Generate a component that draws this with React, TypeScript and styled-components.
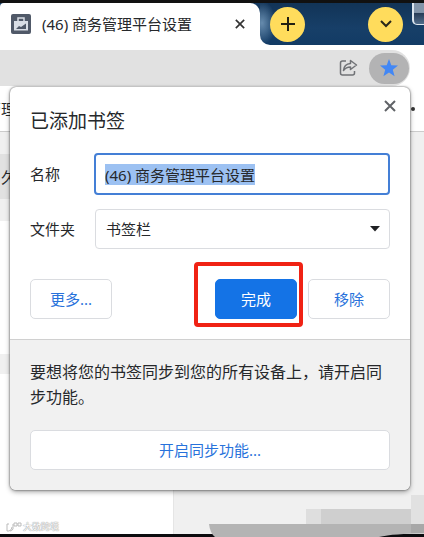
import React, { useEffect, useRef } from "react";
import styled, { createGlobalStyle } from "styled-components";

const GlobalStyle = createGlobalStyle`
  *, *::before, *::after { box-sizing: border-box; }
  body {
    margin: 0;
    color: #26282b;
    font-family: "Noto Sans", "Noto Sans CJK SC", sans-serif;
    font-size: 15px;
    line-height: 20px;
    overflow: hidden;
  }
  button, input, select { font: inherit; color: inherit; margin: 0; }
  button { cursor: pointer; }
`;

const Browser = styled.div`
  position: relative;
  display: flex;
  flex-direction: column;
  min-height: 100vh;
  background: #f0f0f0;
  border-top: 3px solid #111;
  border-bottom: 3px solid #0c0c0f;
`;

const TabStrip = styled.header`
  display: flex;
  height: 42px;
  background: #fff;
`;

const TabHolder = styled.div`
  flex: 0 0 260px;
  background: #163b62;
`;

const Tab = styled.div`
  display: flex;
  align-items: center;
  height: 100%;
  padding: 0 15px 0 11px;
  background: #fff;
  border-radius: 4px 10px 0 0;
`;

const TabTitle = styled.span`
  flex: 1;
  margin-left: 11px;
  white-space: nowrap;
`;

const IconButton = styled.button`
  display: flex;
  align-items: center;
  justify-content: center;
  padding: 0;
  border: 0;
  background: none;
`;

const Frame = styled.div`
  flex: 1;
  display: flex;
  align-items: center;
  justify-content: space-between;
  padding: 0 21px 0 10px;
  background:
    radial-gradient(ellipse 14px 22px at 2px 20px, #668bad, transparent),
    linear-gradient(#123457, #173f68 60%, #123b65);
  border-bottom-left-radius: 10px;
`;

const RoundButton = styled(IconButton)`
  width: 35px;
  height: 35px;
  border-radius: 50%;
  background: #ffdc5c;
`;

const CaptionControl = styled.div`
  position: absolute;
  top: 0;
  right: 0;
  width: 12px;
  height: 22px;
  border: 1px solid #dce5ee;
  border-width: 0 0 1px 2px;
  border-bottom-left-radius: 5px;
  background: linear-gradient(#8395aa 45%, #283d58 50%, #526d8c);
`;

const Toolbar = styled.div`
  padding: 5px 14px 0 0;
  background: #fff;
`;

const AddressBar = styled.div`
  display: flex;
  align-items: center;
  justify-content: flex-end;
  gap: 11px;
  height: 36px;
  padding-right: 1px;
  background: #e1e1e1;
  border-radius: 0 18px 18px 0;
`;

const StarButton = styled(IconButton)`
  width: 40px;
  height: 31px;
  border-radius: 16px;
  background: #b3b3b4;
`;

const BookmarksBar = styled.div`
  display: flex;
  align-items: center;
  justify-content: space-between;
  height: 46px;
  padding-right: 9px;
  background: #fff;
  border-bottom: 1px solid #ccc;
`;

const Clipped = styled.div`
  display: flex;
  justify-content: flex-end;
  width: 16px;
  overflow: hidden;
  white-space: nowrap;
`;

const Overflow = styled.span`
  width: 4px;
  height: 4px;
  border-radius: 50%;
  background: #333;
`;

const Page = styled.main`
  flex: 1;
  display: flex;
  flex-direction: column;
  background: #f0f0f0;
`;

const PageTab = styled.div`
  display: flex;
  align-items: center;
  width: 174px;
  height: 45px;
  margin: 22px 0;
  background: #e1e1e1;
`;

const Card = styled.div<{ $grow?: boolean }>`
  width: 174px;
  height: ${(p) => (p.$grow ? "auto" : "133px")};
  flex: ${(p) => (p.$grow ? "1" : "none")};
  margin-bottom: ${(p) => (p.$grow ? "0" : "20px")};
  background: #fff;
  border-right: 1px solid #e5e5e5;
`;

const Bubble = styled.section`
  position: absolute;
  top: 84px;
  left: 10px;
  right: 14px;
  background: #fff;
  border-radius: 6px;
  box-shadow: 0 0 2px rgba(0, 0, 0, 0.7), 0 2px 5px rgba(0, 0, 0, 0.35);
`;

const BubbleBody = styled.form`
  display: flex;
  flex-direction: column;
  padding: 0 20px 20px;
`;

const BubbleHeader = styled.div`
  display: flex;
  justify-content: space-between;
  height: 66px;
  padding-top: 12px;
  margin-right: -6px;
`;

const Title = styled.h1`
  margin: 8px 0 0;
  font-size: 19px;
  line-height: 28px;
  font-weight: 400;
`;

const CloseButton = styled(IconButton)`
  width: 12px;
  height: 14px;
`;

const Field = styled.div`
  display: grid;
  grid-template-columns: 64px 1fr;
  align-items: center;
`;

const FolderLabel = styled.label`
  align-self: start;
  margin-top: 24px;
`;

const NameInput = styled.input`
  width: 100%;
  height: 42px;
  padding: 0 9px;
  border: 2px solid #447fd6;
  border-radius: 4px;
  outline: 0;
  background: #fff;
  &::selection { background: #9cc1f2; color: #26282b; }
`;

const SelectWrap = styled.div`
  position: relative;
  margin: 14px 0 30px 1px;
`;

const FolderSelect = styled.select`
  display: block;
  width: 100%;
  height: 40px;
  padding: 0 10px;
  appearance: none;
  border: 1px solid #dadce0;
  border-radius: 4px;
  background: #fff;
`;

const Caret = styled.svg`
  position: absolute;
  right: 10px;
  top: 17px;
  pointer-events: none;
`;

const Actions = styled.div`
  display: flex;
  justify-content: space-between;
  gap: 11px;
`;

const ActionGroup = styled.div`
  display: flex;
  gap: 11px;
`;

const Button = styled.button<{ $primary?: boolean; $wide?: boolean }>`
  width: ${(p) => (p.$wide ? "100%" : "82px")};
  height: 40px;
  padding: 0;
  border: 1px solid ${(p) => (p.$primary ? "#1473e6" : "#dadce0")};
  border-radius: 5px;
  background: ${(p) => (p.$primary ? "#1473e6" : "#fff")};
  color: ${(p) => (p.$primary ? "#fff" : "#2872db")};
`;

const Highlighted = styled.div`
  position: relative;
  &::after {
    content: "";
    position: absolute;
    inset: -17px -6px -8px -21px;
    border: 4px solid #f02214;
    border-radius: 4px;
    pointer-events: none;
  }
`;

const SyncPanel = styled.div`
  padding: 20px;
  background: #f1f1f1;
  border-top: 1px solid #d0d0d0;
  border-radius: 0 0 6px 6px;
`;

const SyncText = styled.p`
  margin: 0 -6px 20px 0;
  font-size: 16px;
  line-height: 25px;
`;

const Watermark = styled.div`
  position: absolute;
  left: 6px;
  bottom: 1px;
  display: flex;
  align-items: center;
  gap: 1px;
  font-size: 9px;
  line-height: 12px;
  color: #fff;
  text-shadow: 0 0 1px #888, 0 0 1px #999;
`;

const Redaction = styled.svg`
  position: absolute;
  right: 0;
  bottom: -3px;
`;

const Cross = ({ size, color, weight }: { size: number; color: string; weight: number }) => (
  <svg width={size} height={size} viewBox="0 0 12 12" fill="none" stroke={color} strokeWidth={weight} aria-hidden="true">
    <path d="M1 1l10 10M11 1L1 11" />
  </svg>
);

const SiteIcon = () => (
  <svg width="20" height="20" viewBox="0 0 20 20" aria-hidden="true">
    <rect width="20" height="20" rx="2" fill="#505968" />
    <path d="M7 7V4h6v3" fill="none" stroke="#d9dee5" strokeWidth="1.5" />
    <path d="M3 7h14v9.500H3z" fill="#d9dee5" />
    <path d="M5 15l3-3 2 1 5-3.500V15z" fill="#505968" />
  </svg>
);

const ShareIcon = () => (
  <svg width="19" height="18" viewBox="0 0 19 18" fill="none" stroke="#707276" strokeWidth="1.5" strokeLinejoin="round" aria-hidden="true">
    <path d="M7 2H3.500Q1.500 2 1.500 4v10q0 2 2 2h10q2 0 2-2v-2" />
    <path d="M11.500 1.500L17.500 6l-6 4.500V8Q7 8 4.500 11.500 5 5 11.500 4.500z" />
  </svg>
);

export default function App() {
  const nameRef = useRef<HTMLInputElement>(null);

  useEffect(() => {
    nameRef.current?.focus();
    nameRef.current?.select();
  }, []);

  return (
    <>
      <GlobalStyle />
      <Browser>
        <TabStrip>
          <TabHolder>
            <Tab>
              <SiteIcon />
              <TabTitle>(46) 商务管理平台设置</TabTitle>
              <IconButton aria-label="关闭标签页">
                <Cross size={10} color="#333" weight={2} />
              </IconButton>
            </Tab>
          </TabHolder>
          <Frame>
            <RoundButton aria-label="新标签页">
              <svg width="16" height="16" viewBox="0 0 16 16" stroke="#211f12" strokeWidth="2" aria-hidden="true">
                <path d="M8 1v14M1 8h14" />
              </svg>
            </RoundButton>
            <RoundButton aria-label="搜索标签页">
              <svg width="14" height="10" viewBox="0 0 14 10" fill="none" stroke="#29271a" strokeWidth="2" aria-hidden="true">
                <path d="M2 2l5 5 5-5" />
              </svg>
            </RoundButton>
          </Frame>
          <CaptionControl />
        </TabStrip>
        <Toolbar>
          <AddressBar>
            <IconButton aria-label="分享">
              <ShareIcon />
            </IconButton>
            <StarButton aria-label="修改书签">
              <svg width="20" height="20" viewBox="0 0 20 20" fill="#4287f5" aria-hidden="true">
                <path d="M10 1l2.300 6.200 6.700.3-5.200 4.200 1.800 6.500-5.600-3.700-5.600 3.700 1.800-6.500L1 7.500l6.700-.3z" />
              </svg>
            </StarButton>
          </AddressBar>
        </Toolbar>
        <BookmarksBar>
          <Clipped>管理</Clipped>
          <Overflow />
        </BookmarksBar>
        <Page>
          <PageTab>
            <Clipped>久</Clipped>
          </PageTab>
          <Card />
          <Card $grow />
        </Page>

        <Redaction width="215" height="42" viewBox="0 0 215 42" aria-hidden="true">
          <path d="M97 14h15v15H97z" fill="#dedede" />
          <path d="M112 14h90v15h-90z" fill="#cfcfcf" />
          <path d="M202 0h13v29h-13z" fill="#e1e1e1" />
          <path d="M0 29h215v9.500Q185 38.500 170 42H6Q1 38 0 29z" fill="#b4b4b4" />
          <path d="M202 29h13v9h-13z" fill="#a8a8a8" />
        </Redaction>
        <Watermark>
          <svg width="16" height="11" viewBox="0 0 16 11" fill="none" stroke="#bbb" aria-hidden="true">
            <path d="M1 2v7h2q3-1 3-4M1 2h2M7 2v5q-1 2-3 2M8 1h3v3H8zM12 1h3v3h-3z" />
          </svg>
          <span>大数跨境</span>
        </Watermark>

        <Bubble role="dialog" aria-labelledby="bubble-title">
          <BubbleBody onSubmit={(e: React.FormEvent) => e.preventDefault()}>
            <BubbleHeader>
              <Title id="bubble-title">已添加书签</Title>
              <CloseButton type="button" aria-label="关闭">
                <Cross size={12} color="#606367" weight={2} />
              </CloseButton>
            </BubbleHeader>
            <Field>
              <label htmlFor="name">名称</label>
              <NameInput id="name" ref={nameRef} defaultValue="(46) 商务管理平台设置" />
            </Field>
            <Field>
              <FolderLabel htmlFor="folder">文件夹</FolderLabel>
              <SelectWrap>
                <FolderSelect id="folder" defaultValue="bar">
                  <option value="bar">书签栏</option>
                </FolderSelect>
                <Caret width="10" height="6" viewBox="0 0 10 6" aria-hidden="true">
                  <path d="M0 0h10L5 5.500z" fill="#202124" />
                </Caret>
              </SelectWrap>
            </Field>
            <Actions>
              <Button type="button">更多...</Button>
              <ActionGroup>
                <Highlighted>
                  <Button type="submit" $primary>完成</Button>
                </Highlighted>
                <Button type="button">移除</Button>
              </ActionGroup>
            </Actions>
          </BubbleBody>
          <SyncPanel>
            <SyncText>
              要想将您的书签同步到您的所有设备上，请开启同步功能。
            </SyncText>
            <Button type="button" $wide>开启同步功能...</Button>
          </SyncPanel>
        </Bubble>
      </Browser>
    </>
  );
}
